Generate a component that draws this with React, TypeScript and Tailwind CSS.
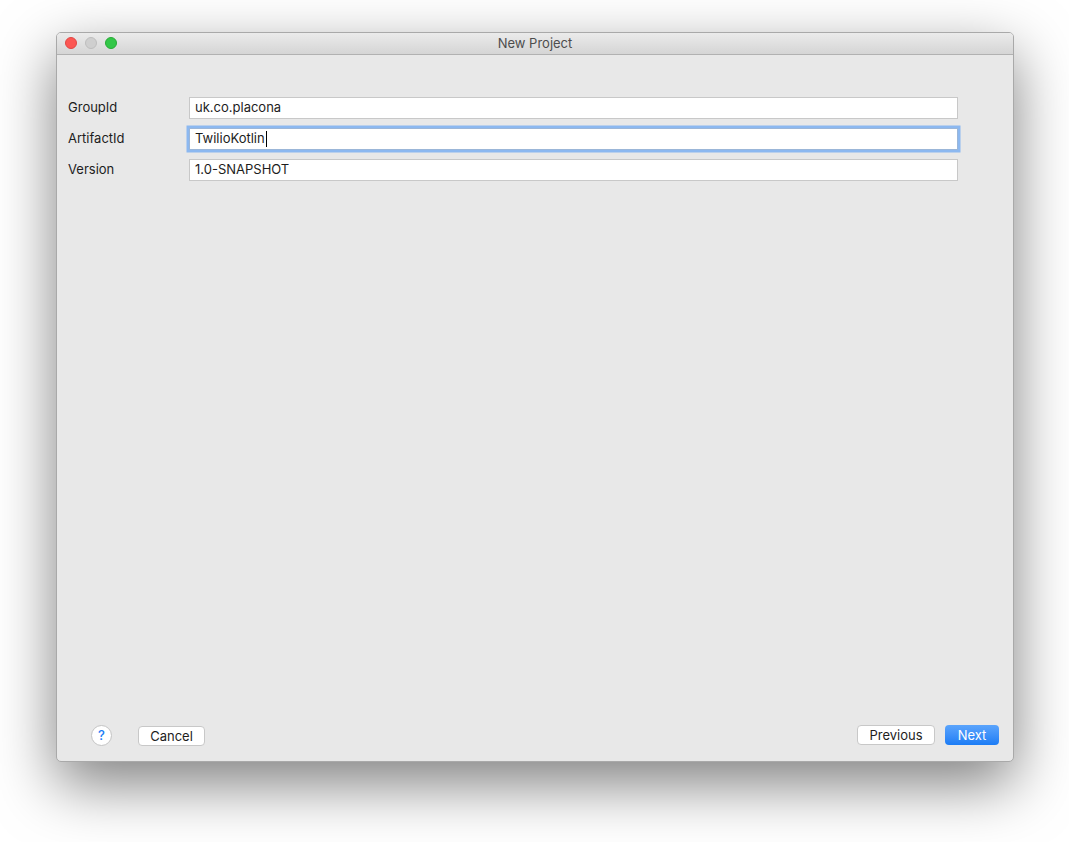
import { useState } from 'react';

const fields = [
  { label: 'GroupId', value: 'uk.co.placona', focused: false },
  { label: 'ArtifactId', value: 'TwilioKotlin', focused: true },
  { label: 'Version', value: '1.0-SNAPSHOT', focused: false },
];

const App = () => {
  const [values, setValues] = useState(fields.map(f => f.value));

  return (
    <div className="w-[1069px] h-[842px] bg-white pt-[32px] pl-[56px] font-['Inter','Liberation_Sans',sans-serif] text-[13px] text-[#1d1d1d]">
      <div className="w-[958px] h-[730px] flex flex-col rounded-[5px] bg-[#e8e8e8] border border-[#a9a9a9] shadow-[0_22px_60px_rgba(0,0,0,0.5)] overflow-hidden">
        <div className="relative h-[22px] shrink-0 flex items-center justify-center bg-gradient-to-b from-[#ebebeb] to-[#d5d5d5] border-b border-[#b1b1b1]">
          <div className="absolute left-[8px] top-[4px] flex gap-[8px]">
            <span className="w-[12px] h-[12px] rounded-full bg-[#fc5753] border border-[#df4744]" />
            <span className="w-[12px] h-[12px] rounded-full bg-[#cfcfcf] border border-[#bdbdbd]" />
            <span className="w-[12px] h-[12px] rounded-full bg-[#33c748] border border-[#27aa35]" />
          </div>
          <span className="text-[13px] text-[#4d4d4d]">New Project</span>
        </div>

        <div className="flex-1 flex flex-col pt-[42px] pl-[11px] pr-[55px]">
          {fields.map((f, i) => (
            <div key={f.label} className="flex items-center h-[22px] mb-[9px]">
              <label className="w-[121px] shrink-0 text-[13px]">{f.label}</label>
              <div
                className={`relative flex-1 h-[22px] flex items-center bg-white px-[5px] ${
                  f.focused
                    ? 'border border-[#9bb6d8] ring-[2.5px] ring-[#8cb8f0]'
                    : 'border border-[#c8c8c8]'
                }`}
              >
                {f.focused ? (
                  <span className="flex items-center text-[13px] text-[#1d1d1d]">
                    {values[i]}
                    <span className="ml-[1px] w-[1px] h-[16px] bg-black" />
                  </span>
                ) : (
                  <input
                    value={values[i]}
                    onChange={e => setValues(v => v.map((x, j) => (j === i ? e.target.value : x)))}
                    className="w-full bg-transparent outline-none text-[13px] text-[#1d1d1d]"
                  />
                )}
              </div>
            </div>
          ))}
        </div>

        <div className="h-[42px] shrink-0 flex items-start pt-[6px] pl-[34px] pr-[14px]">
          <button
            type="button"
            className="w-[21px] h-[21px] rounded-full bg-white border border-[#c4c4c4] flex items-center justify-center text-[#1a7cf5] text-[13px] font-medium"
          >
            ?
          </button>
          <button
            type="button"
            className="ml-[26px] mt-[1px] w-[67px] h-[20px] rounded-[4px] bg-white border border-[#c8c8c8] text-[13px] leading-none"
          >
            Cancel
          </button>
          <div className="flex-1" />
          <button
            type="button"
            className="w-[78px] h-[20px] rounded-[4px] bg-white border border-[#c8c8c8] text-[13px] leading-none"
          >
            Previous
          </button>
          <button
            type="button"
            className="ml-[10px] w-[54px] h-[20px] rounded-[4px] bg-gradient-to-b from-[#5aa4fc] to-[#1a7cf5] text-white text-[13px] leading-none"
          >
            Next
          </button>
        </div>
      </div>
    </div>
  );
};

export default App;
